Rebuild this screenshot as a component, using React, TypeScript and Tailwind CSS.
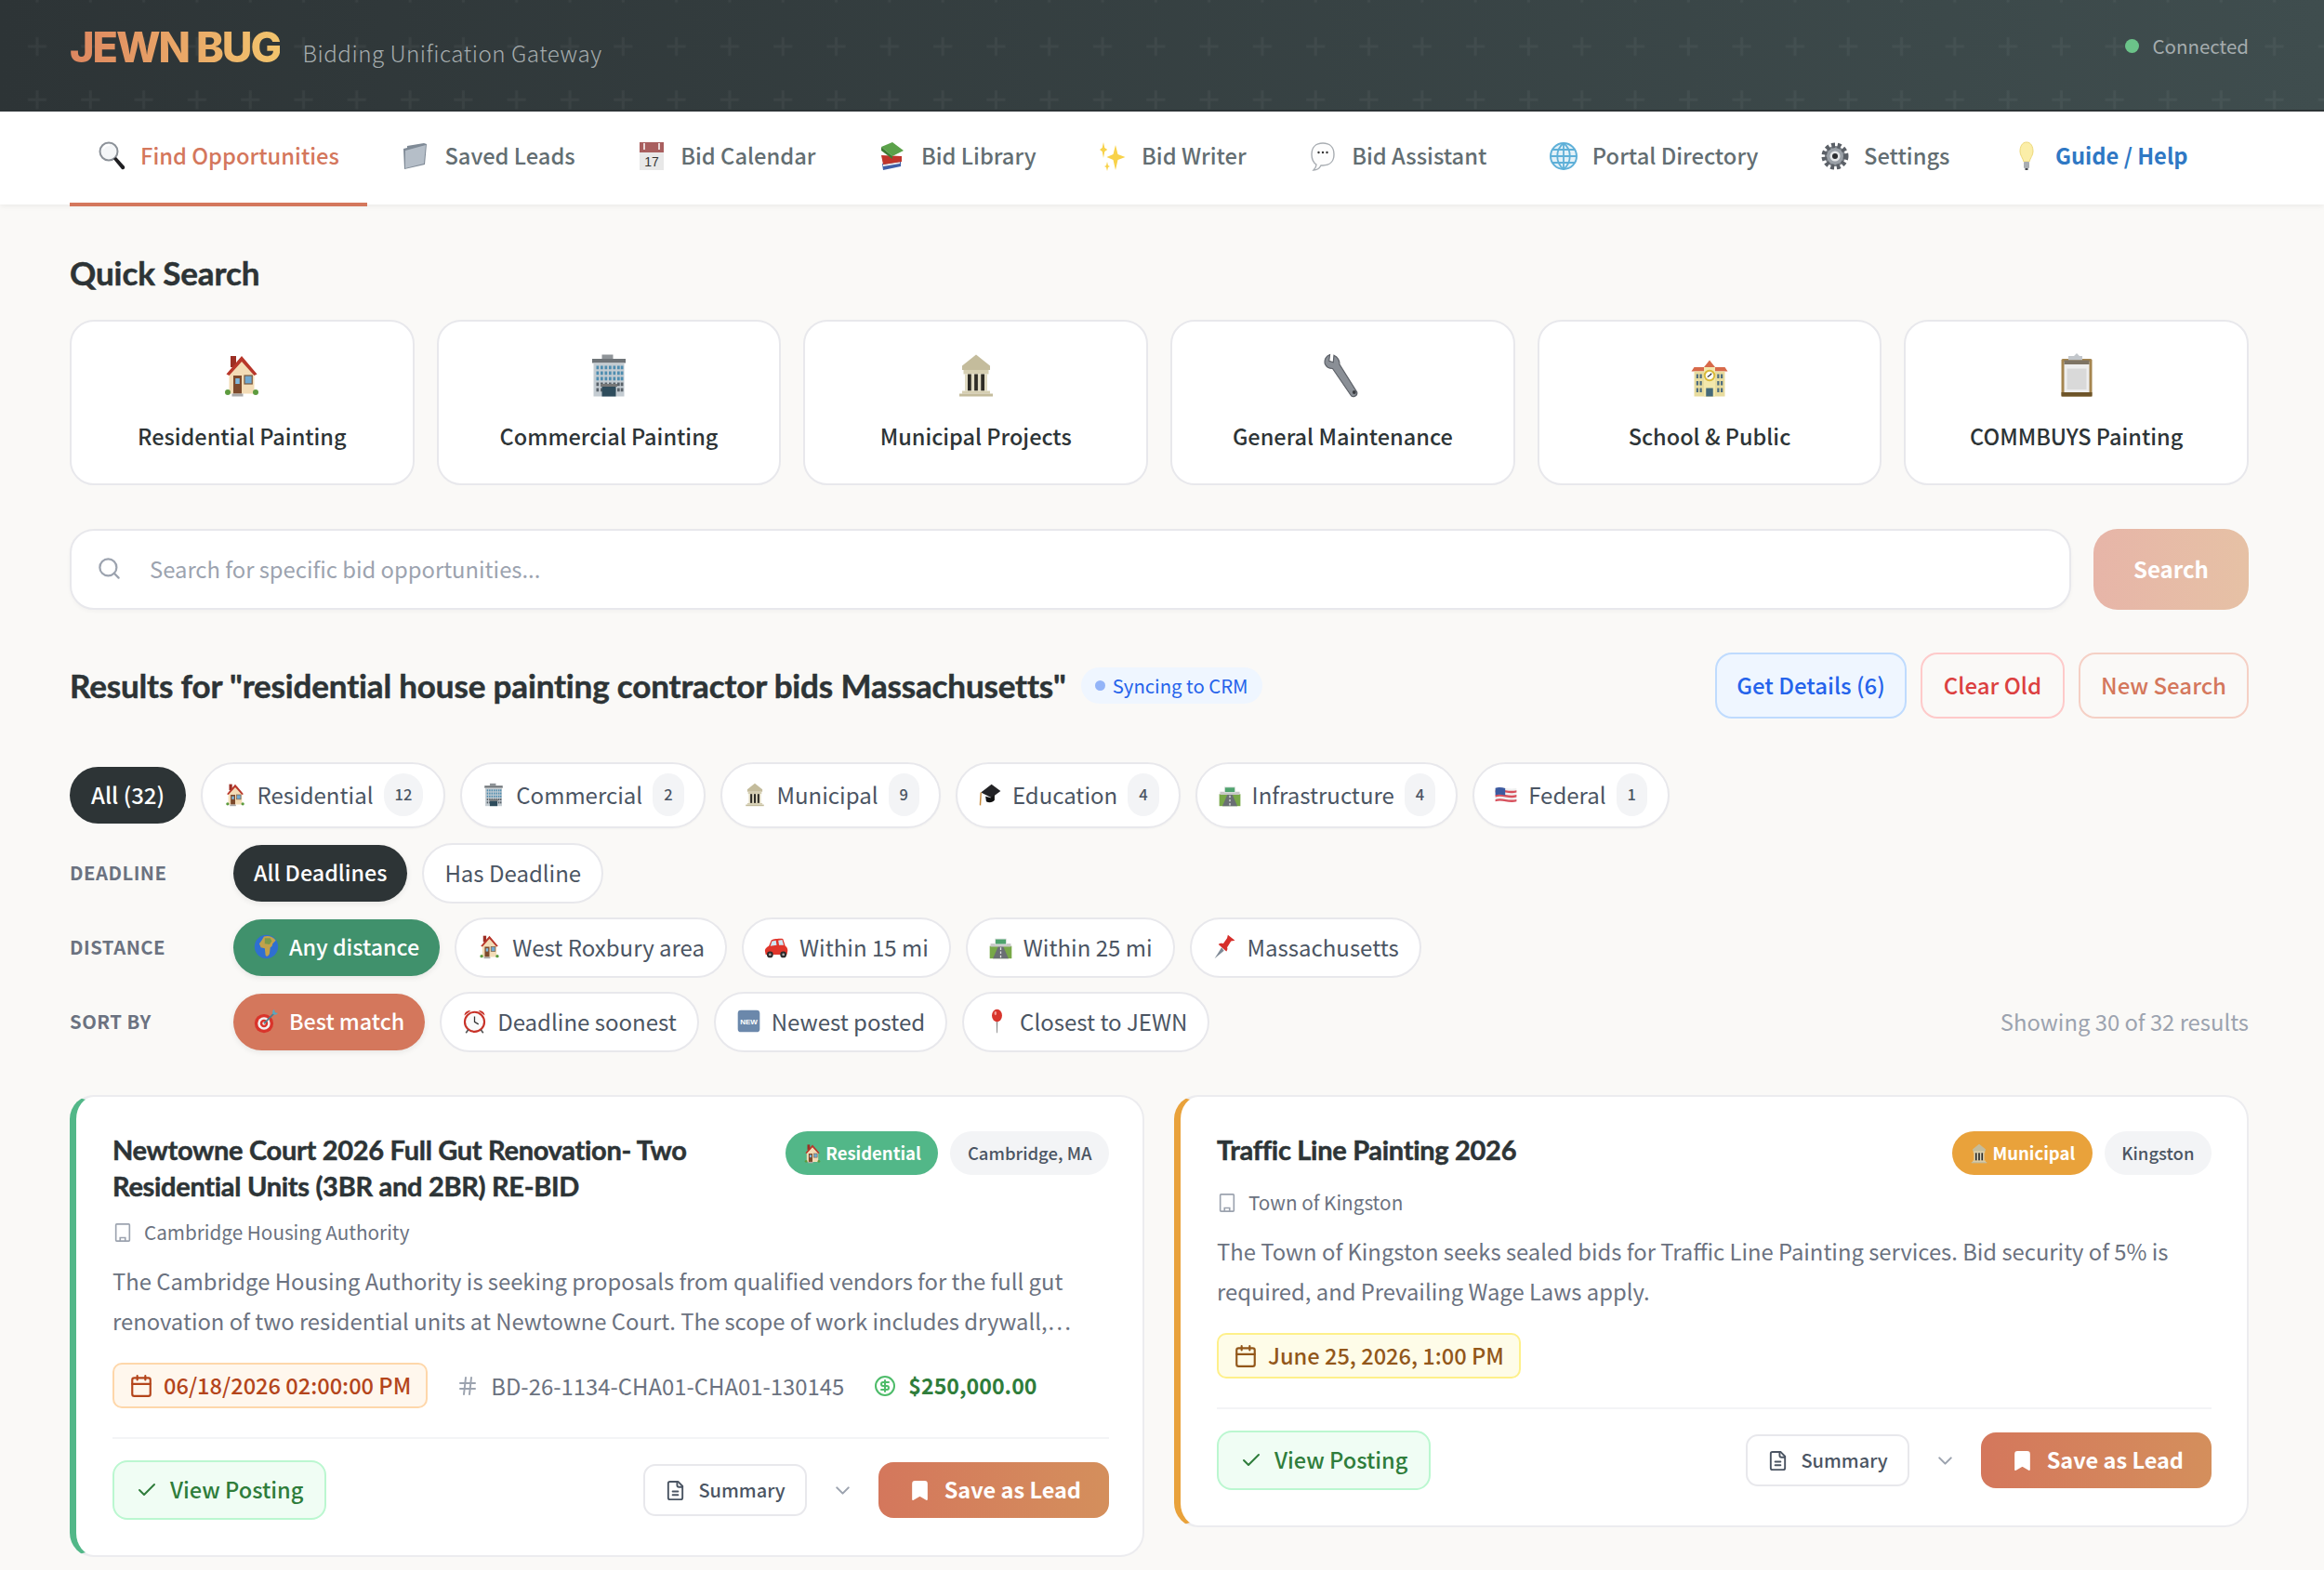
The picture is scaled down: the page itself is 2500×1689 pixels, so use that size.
import React from "react";

const body = "font-['Noto_Sans_CJK_SC','Noto_Sans',sans-serif]";
const head = "font-['Lato','Inter',sans-serif] [-webkit-text-stroke:0.5px_#2d3436]";

const S = ({ children, size = 32, className = "" }: { children: React.ReactNode; size?: number; className?: string }) => (
  <svg width={size} height={size} viewBox="0 0 32 32" className={`shrink-0 ${className}`}>{children}</svg>
);

const Magnifier = ({ size = 32 }: { size?: number }) => (
  <S size={size}>
    <circle cx="12" cy="11" r="9.5" fill="#f4f6f8" stroke="#8b9198" strokeWidth="2" />
    <path d="M6 8a7 7 0 0 1 7-4" stroke="#fff" strokeWidth="2" fill="none" />
    <path d="M17 19l3-2 9 10c1 2-1 4-3 3z" fill="#1f1f22" />
  </S>
);
const Folder = ({ size = 32 }: { size?: number }) => (
  <S size={size}>
    <path d="M3 8l4-1V5l18-3 3 1-2 22-22 5z" fill="#7f8a96" />
    <path d="M5 10l22-6-2 20-20 5z" fill="#b5bec8" />
  </S>
);
const Calendar = ({ size = 32 }: { size?: number }) => (
  <S size={size}>
    <rect x="3" y="1" width="26" height="30" fill="#e8e8e8" />
    <rect x="3" y="1" width="26" height="11" fill="#a95f5f" />
    <path d="M8 2v7M24 2v7" stroke="#fff" strokeWidth="1.5" />
    <text x="16" y="27" fontSize="14" textAnchor="middle" fill="#333" fontFamily="Liberation Sans">17</text>
  </S>
);
const Books = ({ size = 32 }: { size?: number }) => (
  <S size={size}>
    <path d="M5 24l20-3v6L6 31z" fill="#3f5fa8" />
    <path d="M6 25l18-3v2L6 27z" fill="#eee" />
    <path d="M4 15l22 1v6L6 25z" fill="#c0352b" />
    <path d="M4 6l12-5 12 9-12 6z" fill="#5ba24a" />
    <path d="M4 6l12 10v3L4 10z" fill="#3e7c33" />
  </S>
);
const Sparkles = ({ size = 32 }: { size?: number }) => (
  <S size={size}>
    <path d="M19 4l2.500 10 8 3-8 3L19 31l-2.500-11-7-3 7-3z" fill="#f8d24a" />
    <path d="M6 1l1.300 6 3 2-3 2L6 18l-1.300-7-2.700-2 2.700-2z" fill="#f8d24a" />
    <path d="M10 22l1 4 2 1-2 1-1 4-1-4-2-1 2-1z" fill="#f8d24a" />
  </S>
);
const Speech = ({ size = 32 }: { size?: number }) => (
  <S size={size}>
    <path d="M16 2C8 2 4 7 4 14c0 6 2 9 5 11 0 2-1 4-3 6 4 0 7-3 8-5h2c8 0 12-5 12-12S24 2 16 2z" fill="#fdfdfd" stroke="#a8adb2" strokeWidth="1.400" />
    <circle cx="11.500" cy="12" r="1.200" fill="#333" /><circle cx="16" cy="12" r="1.200" fill="#333" /><circle cx="20.500" cy="12" r="1.200" fill="#333" />
  </S>
);
const Globe = ({ size = 32 }: { size?: number }) => (
  <S size={size}>
    <circle cx="16" cy="16" r="14" fill="#e3f1f8" stroke="#5fb0d8" strokeWidth="2" />
    <path d="M2 16h28M4 9h24M4 23h24M16 2v28M16 2c-9 7-9 21 0 28M16 2c9 7 9 21 0 28" stroke="#5fb0d8" strokeWidth="1.800" fill="none" />
  </S>
);
const Gear = ({ size = 32 }: { size?: number }) => (
  <S size={size}>
    <circle cx="16" cy="16" r="11" fill="#7b8087" stroke="#5b6067" strokeWidth="7" strokeDasharray="3.500 2.500" />
    <circle cx="16" cy="16" r="9" fill="#9aa0a7" />
    <circle cx="16" cy="16" r="5.500" fill="#e4e6e8" />
    <circle cx="16" cy="16" r="3" fill="#2b2d30" />
  </S>
);
const Bulb = ({ size = 32 }: { size?: number }) => (
  <S size={size}>
    <path d="M16 1c-5 0-7 5-7 10 0 4 3 7 4 11h6c1-4 4-7 4-11 0-5-2-10-7-10z" fill="#fbeea8" stroke="#edd87a" strokeWidth="1" />
    <rect x="13" y="22" width="6" height="7" rx="1" fill="#a9adb2" />
    <rect x="14.500" y="29" width="3" height="2" fill="#45484c" />
  </S>
);
const House = ({ size = 32 }: { size?: number }) => (
  <S size={size}>
    <path d="M7 14L16 4l9 10v15H7z" fill="#f3dcb6" />
    <rect x="8" y="2" width="4" height="8" fill="#9c2f24" />
    <path d="M5 15L16 2l11 13-2 1L16 6 7 16z" fill="#b8362a" />
    <rect x="10" y="16" width="6" height="13" fill="#7d4a2c" />
    <rect x="11.500" y="18" width="3" height="4" fill="#7fb8dc" />
    <rect x="18" y="16" width="5.500" height="6" fill="#6fa8d0" stroke="#7d5a3c" strokeWidth="0.800" />
    <circle cx="6" cy="28" r="2" fill="#5d9b3f" /><circle cx="26" cy="28" r="2" fill="#5d9b3f" />
    <rect x="9" y="29" width="8" height="2" fill="#a9a9a9" />
  </S>
);
const Office = ({ size = 32 }: { size?: number }) => (
  <S size={size}>
    <rect x="11" y="1" width="8" height="3" fill="#8f9498" />
    <rect x="4" y="4" width="24" height="3" fill="#6f7478" />
    <rect x="5" y="7" width="22" height="24" fill="#c4ccd2" />
    {[9, 13, 17, 21, 25].map((y) => [7, 10, 13, 16, 19, 22, 24.5].map((x) => <rect key={`${x}-${y}`} x={x} y={y} width="1.800" height="2.500" fill={y > 20 ? "#59626a" : "#4e8db0"} />))}
    <rect x="11" y="24" width="10" height="7" fill="#2e4c5c" />
    <rect x="10" y="22" width="12" height="2" fill="#777" />
  </S>
);
const Classical = ({ size = 32 }: { size?: number }) => (
  <S size={size}>
    <path d="M16 1L6 9v3h20V9z" fill="#c4bc9c" />
    <rect x="7" y="12" width="18" height="3" fill="#d6cfb2" />
    <rect x="8" y="15" width="16" height="12" fill="#e0dac2" />
    <rect x="10" y="15" width="2.500" height="12" fill="#2e2c26" /><rect x="14.750" y="15" width="2.500" height="12" fill="#2e2c26" /><rect x="19.500" y="15" width="2.500" height="12" fill="#2e2c26" />
    <rect x="6" y="27" width="20" height="2" fill="#d6cfb2" /><rect x="4" y="29" width="24" height="2" fill="#c4bc9c" />
  </S>
);
const Wrench = ({ size = 32 }: { size?: number }) => (
  <S size={size}>
    <path d="M7 1C4 2 3 5 3.500 7.500 4.500 10 7 11 9 11l13 19c1 2 5 1 4.500-2L14 8c0-3-1-5-4-6.500l-.5 5-3-1z" fill="#8a8f96" stroke="#5d6168" strokeWidth="0.800" />
    <circle cx="24.500" cy="28" r="1.300" fill="#3a3c40" />
  </S>
);
const School = ({ size = 32 }: { size?: number }) => (
  <S size={size}>
    <path d="M16 5l-4 5H5l-2 3h26l-2-3h-7z" fill="#d86a4a" />
    <rect x="5" y="13" width="22" height="18" fill="#e8dc9e" />
    <rect x="12" y="10" width="8" height="21" fill="#f3e8ac" />
    <circle cx="16" cy="16" r="3.500" fill="#fff" stroke="#d9b93a" strokeWidth="1.300" />
    <path d="M16 16l1.500-1.500M16 16l-1.500 1" stroke="#333" strokeWidth="0.800" />
    <rect x="13.500" y="25" width="5" height="6" fill="#456a7a" />
    {[15, 20, 25].map((y) => [6.5, 9, 21.5, 24].map((x) => <rect key={`${x}-${y}`} x={x} y={y} width="1.500" height="3" fill="#4f6e80" />))}
  </S>
);
const Clipboard = ({ size = 32 }: { size?: number }) => (
  <S size={size}>
    <rect x="5" y="4" width="22" height="27" rx="1" fill="#a5854f" />
    <rect x="7" y="6" width="18" height="23" fill="#eeeeee" />
    <path d="M12 2h2l2-2 2 2h2v3H10V2z" fill="#c2c6cb" />
    <rect x="7" y="5" width="18" height="3" fill="#7e7464" />
    <rect x="9" y="11" width="14" height="15" fill="#d9d9d9" />
    <rect x="5" y="28" width="22" height="3" fill="#6d5429" />
  </S>
);
const GradCap = ({ size = 32 }: { size?: number }) => (
  <S size={size}>
    <path d="M18 2L4 13l14 7 12-9z" fill="#232326" />
    <path d="M10 18l1 7c4 2 9 1 11-2v-7l-5 4z" fill="#111" />
    <path d="M4 13l-1 17" stroke="#c68a3c" strokeWidth="1.800" />
  </S>
);
const Motorway = ({ size = 32 }: { size?: number }) => (
  <S size={size}>
    <rect x="2" y="15" width="28" height="16" fill="#78a848" />
    <path d="M13 15h6l7 16H6z" fill="#6a6f74" />
    <path d="M16 17v14" stroke="#e6e6e6" strokeWidth="1.500" strokeDasharray="3 2" />
    <rect x="3" y="12" width="26" height="4" fill="#c8c8c8" />
    <rect x="9" y="6" width="14" height="7" fill="#4fa36e" stroke="#e5e5e5" />
  </S>
);
const Flag = ({ size = 32 }: { size?: number }) => (
  <S size={size}>
    <path d="M2 7c9-3 18 3 28 0v18c-10 3-19-3-28 0z" fill="#f1f1f1" />
    <path d="M2 10c9-3 18 3 28 0v3c-10 3-19-3-28 0zM2 16c9-3 18 3 28 0v3c-10 3-19-3-28 0zM2 22c9-3 18 3 28 0v3c-10 3-19-3-28 0z" fill="#d8505c" />
    <path d="M2 7c5-1.500 9-.5 13 .5V17c-4-1-8-2-13-.5z" fill="#3c5aa0" />
  </S>
);
const Earth = ({ size = 32 }: { size?: number }) => (
  <S size={size}>
    <circle cx="16" cy="16" r="15" fill="#2f6fd0" />
    <path d="M13 3c5-2 12 0 15 5l-4 4c0 2-1 4-3 5l-1 8c-1 3-4 4-5 2l-1-9-5-1-2-5 3-4z" fill="#c2a24a" />
    <path d="M14 5l7 0 2 4-3 4-6-1z" fill="#7a9a4a" />
  </S>
);
const Car = ({ size = 32 }: { size?: number }) => (
  <S size={size}>
    <path d="M9 8c1-2 12-3 15-2l3 9c2 1 3 3 3 6l-1 5H2l-1-5c0-3 3-5 5-6z" fill="#e0352b" />
    <path d="M10 9l5-1 1 6-8 1zM18 8l5-1 2 7-6 0z" fill="#cfe6f2" />
    <circle cx="7.500" cy="26" r="4" fill="#2a2a2a" /><circle cx="24.500" cy="26" r="4" fill="#2a2a2a" />
    <circle cx="7.500" cy="26" r="1.600" fill="#aaa" /><circle cx="24.500" cy="26" r="1.600" fill="#aaa" />
  </S>
);
const PushPin = ({ size = 32 }: { size?: number }) => (
  <S size={size}>
    <path d="M20 1l9 7-5 1-5 8c1 2 0 4-1 5L8 13c1-1 4-2 6-1l5-7z" fill="#d62f2b" />
    <path d="M12 17l-9 14 12-10z" fill="#7f8a96" />
  </S>
);
const Target = ({ size = 32 }: { size?: number }) => (
  <S size={size}>
    <circle cx="13" cy="19" r="12" fill="#d9342b" />
    <circle cx="13" cy="19" r="8" fill="#f4f0f0" />
    <circle cx="13" cy="19" r="5" fill="#d9342b" />
    <circle cx="13" cy="19" r="2" fill="#f4f0f0" />
    <path d="M13 19L27 5" stroke="#4a7f8f" strokeWidth="2" />
    <path d="M24 3l2-2 1 4 4 1-3 2-4-1z" fill="#59a8c0" />
  </S>
);
const Alarm = ({ size = 32 }: { size?: number }) => (
  <S size={size}>
    <path d="M3 9c0-4 4-7 8-6zM29 9c0-4-4-7-8-6z" fill="#c83228" />
    <circle cx="16" cy="17" r="12.500" fill="#fafafa" stroke="#c83228" strokeWidth="2.500" />
    <path d="M16 10v7l5 3" stroke="#333" strokeWidth="1.500" fill="none" />
    <path d="M8 27l-3 4M24 27l3 4" stroke="#555" strokeWidth="2" />
  </S>
);
const NewBadge = ({ size = 32 }: { size?: number }) => (
  <S size={size}>
    <rect x="2" y="2" width="28" height="28" rx="4" fill="#6b88ab" />
    <text x="16" y="20" fontSize="9.500" fontWeight="700" textAnchor="middle" fill="#fff" fontFamily="Liberation Sans">NEW</text>
  </S>
);
const RoundPin = ({ size = 32 }: { size?: number }) => (
  <S size={size}>
    <path d="M15 14h2l-.5 17h-1z" fill="#8c8c8c" />
    <ellipse cx="16" cy="9" rx="6.500" ry="8" fill="#d8352c" />
    <ellipse cx="14" cy="6" rx="1.500" ry="2.500" fill="#f3a19a" />
  </S>
);

const Tile = ({ icon, label }: { icon: React.ReactNode; label: string }) => (
  <button className="flex h-[178px] flex-col items-center rounded-[26px] border-2 border-[#e8e8ec] bg-white pt-[34px]">
    {icon}
    <span className="mt-[23px] text-[23.500px] leading-[36px] font-medium text-[#2d3436]">{label}</span>
  </button>
);

const navItems: [React.ReactNode, string][] = [
  [<Folder />, "Saved Leads"],
  [<Calendar />, "Bid Calendar"],
  [<Books />, "Bid Library"],
  [<Sparkles />, "Bid Writer"],
  [<Speech />, "Bid Assistant"],
  [<Globe />, "Portal Directory"],
  [<Gear />, "Settings"],
];

const Chip = ({ icon, label, count }: { icon?: React.ReactNode; label: string; count?: string }) => (
  <span className="flex h-[71px] items-center gap-[11px] rounded-full border-2 border-[#e8e8ec] bg-white px-[21.500px] pb-[2px] text-[24px] whitespace-nowrap text-[#4b5563] shadow-[0_1px_2px_rgba(0,0,0,0.03)]">
    {icon}
    {label}
    <span className="flex h-[46px] min-w-[33px] items-center justify-center rounded-full bg-[#f3f4f6] px-[12px] text-[16.500px] font-medium text-[#4b5563]">{count}</span>
  </span>
);

const Pill = ({ icon, label, active }: { icon?: React.ReactNode; label: string; active?: string }) => (
  <span className={`flex items-center gap-[11px] rounded-full pb-[2px] whitespace-nowrap ${active ? `my-[2px] h-[61px] px-[22px] text-[23.300px] font-medium text-white shadow-[0_2px_6px_rgba(0,0,0,0.08)] ${active}` : "h-[65px] border-2 border-[#e8e8ec] bg-white px-[22px] text-[24px] text-[#4b5563]"}`}>
    {icon}
    {label}
  </span>
);

const FilterRow = ({ label, children, right }: { label: string; children: React.ReactNode; right?: React.ReactNode }) => (
  <div className="flex h-[65px] items-center">
    <span className="w-[176px] pb-[2px] text-[20.300px] font-semibold tracking-[0.5px] text-[#6b7280]">{label}</span>
    <div className="flex items-center gap-[16px]">{children}</div>
    {right}
  </div>
);

const OrgIcon = () => (
  <svg width="22" height="24" viewBox="0 0 24 24" fill="none" stroke="#9ca3af" strokeWidth="1.800">
    <rect x="4" y="2" width="16" height="20" rx="1" />
    <path d="M9 22v-4h6v4M8 6h.01M12 6h.01M16 6h.01M8 10h.01M12 10h.01M16 10h.01M8 14h.01M12 14h.01M16 14h.01" />
  </svg>
);
const CalIcon = ({ color }: { color: string }) => (
  <svg width="26" height="26" viewBox="0 0 24 24" fill="none" stroke={color} strokeWidth="2" strokeLinecap="round">
    <path d="M8 2v4M16 2v4" />
    <rect x="3" y="4" width="18" height="18" rx="2" />
    <path d="M3 10h18" />
  </svg>
);
const CheckIcon = () => (
  <svg width="24" height="24" viewBox="0 0 24 24" fill="none" stroke="#2f7d3b" strokeWidth="2" strokeLinecap="round" strokeLinejoin="round">
    <path d="M20 6L9 17l-5-5" />
  </svg>
);
const DocIcon = () => (
  <svg width="23" height="23" viewBox="0 0 24 24" fill="none" stroke="#4b5563" strokeWidth="2" strokeLinecap="round" strokeLinejoin="round">
    <path d="M15 2H6a2 2 0 0 0-2 2v16a2 2 0 0 0 2 2h12a2 2 0 0 0 2-2V7z" />
    <path d="M14 2v4a2 2 0 0 0 2 2h4M9 13h6M9 17h6" />
  </svg>
);
const Chevron = () => (
  <svg width="25" height="25" viewBox="0 0 24 24" fill="none" stroke="#9ca3af" strokeWidth="2" strokeLinecap="round" strokeLinejoin="round">
    <path d="M6 9l6 6 6-6" />
  </svg>
);
const Bookmark = () => (
  <svg width="25" height="25" viewBox="0 0 24 24" fill="#fff" stroke="#fff" strokeWidth="2" strokeLinecap="round" strokeLinejoin="round">
    <path d="M19 21l-7-4-7 4V5a2 2 0 0 1 2-2h10a2 2 0 0 1 2 2z" />
  </svg>
);

const Actions = () => (
  <div className="flex items-center pt-[23px]">
    <span className="flex h-[64px] items-center gap-[13px] rounded-[16px] border-2 border-[#bbf7d0] bg-[#f0fdf4] px-[23px] text-[23.600px] font-medium whitespace-nowrap text-[#2f7d3b]">
      <CheckIcon />
      View Posting
    </span>
    <span className="ml-auto flex h-[56px] items-center gap-[13px] rounded-[13px] border-2 border-[#e8e8ec] bg-white pr-[21px] pl-[21px] text-[20px] font-medium whitespace-nowrap text-[#4b5563]">
      <DocIcon />
      Summary
    </span>
    <span className="mx-[26px] flex"><Chevron /></span>
    <span className="flex h-[60px] items-center gap-[14px] rounded-[16px] bg-gradient-to-r from-[#d4775c] to-[#d48f5c] pr-[30px] pl-[32px] text-[23.500px] font-semibold whitespace-nowrap text-white">
      <Bookmark />
      Save as Lead
    </span>
  </div>
);

const Tag = ({ children, className = "" }: { children: React.ReactNode; className?: string }) => (
  <span className={`flex h-[47px] shrink-0 items-center rounded-full px-[18.500px] text-[18.500px] whitespace-nowrap ${className}`}>{children}</span>
);

const Card = ({
  accent,
  title,
  tag,
  loc,
  org,
  desc,
  meta,
  pr,
}: {
  accent: string;
  title: React.ReactNode;
  tag: React.ReactNode;
  loc: string;
  org: string;
  desc: React.ReactNode;
  meta: React.ReactNode;
  pr: string;
}) => (
  <div className={`flex flex-col rounded-[26px] border-2 border-l-[7px] border-[#ececef] bg-white pt-[37px] pb-[38px] pl-[39px] ${accent} ${pr}`}>
    <div className="flex items-start justify-between gap-[16px]">
      <h3 className={`${head} pb-[1px] text-[29px] leading-[39px] font-bold tracking-[-0.3px] text-[#2d3436]`}>{title}</h3>
      <div className="flex shrink-0 gap-[13px]">
        {tag}
        <Tag className="bg-[#f3f4f6] font-medium text-[#4b5563]">{loc}</Tag>
      </div>
    </div>
    <div className="mt-[15px] flex h-[30px] items-center gap-[12px] text-[20.700px] whitespace-nowrap text-[#6b7280]">
      <OrgIcon />
      {org}
    </div>
    <p className="mt-[15px] pb-[1px] text-[23.800px] leading-[43px] whitespace-nowrap text-[#6b7280]">{desc}</p>
    <div className="mt-[23px] flex items-center">{meta}</div>
    <div className="mt-[31px] border-t-2 border-[#f3f4f6]" />
    <Actions />
  </div>
);

export default function App() {
  return (
    <div className={`${body} min-h-[1689px] bg-[#faf9f7]`}>
      <header className="relative flex h-[120px] items-center justify-between overflow-hidden border-b-2 border-[#2d3436] bg-gradient-to-r from-[#2d3436] to-[#3f4d4e] pr-[81px] pb-[16px] pl-[75px]">
        <svg className="absolute inset-0 h-full w-full" aria-hidden="true">
          <defs>
            <pattern id="plus" width="57.300" height="57.300" x="11" y="22" patternUnits="userSpaceOnUse">
              <path d="M29 18v20M19 28h20" stroke="#ffffff" strokeOpacity="0.045" strokeWidth="3" />
            </pattern>
          </defs>
          <rect width="100%" height="100%" fill="url(#plus)" />
        </svg>
        <div className="relative flex items-baseline gap-[24px]">
          <span className="bg-gradient-to-r from-[#dd8660] to-[#f2c46d] bg-clip-text font-['Inter',sans-serif] text-[45px] leading-[60px] font-extrabold tracking-[-2px] text-transparent">JEWN BUG</span>
          <span className="text-[24.200px] font-light tracking-[0.5px] text-[#a5acae]">Bidding Unification Gateway</span>
        </div>
        <div className="relative -mt-[3px] flex items-center gap-[14px] text-[20.500px] text-[#a5acae]">
          <span className="h-[15px] w-[15px] rounded-full bg-[#6bc389]" />
          Connected
        </div>
      </header>

      <nav className="flex h-[100px] items-stretch gap-[6.500px] bg-white pr-[81px] pl-[75px] shadow-[0_2px_6px_rgba(0,0,0,0.06)]">
        <span className="-mb-[2px] flex items-center gap-[14px] border-b-4 border-[#d4775c] px-[30px] pb-[2px] text-[23.700px] font-medium whitespace-nowrap text-[#d4775c]">
          <Magnifier />
          Find Opportunities
        </span>
        {navItems.map(([icon, label]) => (
          <span key={label} className="-mb-[2px] flex items-center gap-[15px] border-b-4 border-transparent px-[30px] pb-[2px] text-[23.700px] font-medium whitespace-nowrap text-[#636e72]">
            {icon}
            {label}
          </span>
        ))}
        <span className="-mb-[2px] flex items-center gap-[15px] border-b-4 border-transparent px-[30px] pb-[2px] text-[23.700px] font-semibold whitespace-nowrap text-[#2f78c4]">
          <Bulb />
          Guide / Help
        </span>
      </nav>

      <main className="pt-[48px] pr-[81px] pl-[75px]">
        <h2 className={`${head} text-[35px] leading-[50px] font-bold tracking-[-0.1px] text-[#2d3436]`}>Quick Search</h2>
        <div className="mt-[26px] grid grid-cols-6 gap-[24px]">
          <Tile icon={<House size={48} />} label="Residential Painting" />
          <Tile icon={<Office size={48} />} label="Commercial Painting" />
          <Tile icon={<Classical size={48} />} label="Municipal Projects" />
          <Tile icon={<Wrench size={48} />} label="General Maintenance" />
          <Tile icon={<School size={48} />} label="School &amp; Public" />
          <Tile icon={<Clipboard size={48} />} label="COMMBUYS Painting" />
        </div>

        <div className="mt-[47px] flex items-stretch gap-[24px]">
          <div className="flex h-[87px] flex-1 items-center gap-[30px] rounded-[26px] border-2 border-[#e8e8ec] bg-white pb-[2px] pl-[27px] text-[23.800px] text-[#9ca3af] shadow-[0_2px_4px_rgba(0,0,0,0.03)]">
            <svg width="27" height="27" viewBox="0 0 24 24" fill="none" stroke="#9ca3af" strokeWidth="2" strokeLinecap="round">
              <circle cx="11" cy="11" r="8" />
              <path d="M21 21l-4.300-4.300" />
            </svg>
            Search for specific bid opportunities...
          </div>
          <button className="flex w-[167px] items-center justify-center rounded-[26px] bg-gradient-to-r from-[#e7b5a8] to-[#e6c1a5] pb-[2px] text-[24px] font-semibold text-white">Search</button>
        </div>

        <div className="mt-[46px] flex h-[71px] items-center">
          <h2 className={`${head} text-[35px] font-bold tracking-[-0.15px] whitespace-nowrap text-[#2d3436]`}>Results for "residential house painting contractor bids Massachusetts"</h2>
          <span className="ml-[16px] flex h-[39px] items-center gap-[8px] rounded-full bg-[#eff6ff] px-[15px] pb-[1px] text-[20.300px] whitespace-nowrap text-[#2563eb]">
            <span className="h-[11px] w-[11px] rounded-full bg-[#93b4f8]" />
            Syncing to CRM
          </span>
          <div className="ml-auto flex gap-[15px]">
            <button className="h-[71px] rounded-[18px] border-2 border-[#bfdbfe] bg-[#eff6ff] px-[21px] pb-[2px] text-[24px] font-medium whitespace-nowrap text-[#2563eb]">Get Details (6)</button>
            <button className="h-[71px] rounded-[18px] border-2 border-[#fecaca] px-[23px] pb-[2px] text-[24px] font-medium whitespace-nowrap text-[#dc4040]">Clear Old</button>
            <button className="h-[71px] rounded-[18px] border-2 border-[#f5d0c5] px-[22px] pb-[2px] text-[24px] font-medium whitespace-nowrap text-[#d4775c]">New Search</button>
          </div>
        </div>

        <div className="mt-[47px] flex items-center gap-[16px]">
          <span className="flex h-[61px] items-center rounded-full bg-[#2d3436] px-[23px] pb-[2px] text-[24px] font-medium whitespace-nowrap text-white">All (32)</span>
          <Chip icon={<House size={26} />} label="Residential" count="12" />
          <Chip icon={<Office size={26} />} label="Commercial" count="2" />
          <Chip icon={<Classical size={26} />} label="Municipal" count="9" />
          <Chip icon={<GradCap size={26} />} label="Education" count="4" />
          <Chip icon={<Motorway size={26} />} label="Infrastructure" count="4" />
          <Chip icon={<Flag size={26} />} label="Federal" count="1" />
        </div>

        <div className="mt-[16px] flex flex-col gap-[15px]">
          <FilterRow label="DEADLINE">
            <Pill label="All Deadlines" active="bg-[#2d3436]" />
            <Pill label="Has Deadline" />
          </FilterRow>
          <FilterRow label="DISTANCE">
            <Pill icon={<Earth size={27} />} label="Any distance" active="bg-[#40916c]" />
            <Pill icon={<House size={27} />} label="West Roxbury area" />
            <Pill icon={<Car size={27} />} label="Within 15 mi" />
            <Pill icon={<Motorway size={27} />} label="Within 25 mi" />
            <Pill icon={<PushPin size={27} />} label="Massachusetts" />
          </FilterRow>
          <FilterRow label="SORT BY" right={<span className="ml-auto pb-[2px] text-[23.800px] text-[#9ca3af]">Showing 30 of 32 results</span>}>
            <Pill icon={<Target size={27} />} label="Best match" active="bg-[#d4775c]" />
            <Pill icon={<Alarm size={27} />} label="Deadline soonest" />
            <Pill icon={<NewBadge size={27} />} label="Newest posted" />
            <Pill icon={<RoundPin size={27} />} label="Closest to JEWN" />
          </FilterRow>
        </div>

        <div className="mt-[46px] grid grid-cols-2 items-start gap-[32px]">
          <Card
            accent="border-l-[#52b788]"
            pr="pr-[36px]"
            title={<>Newtowne Court 2026 Full Gut Renovation- Two<br />Residential Units (3BR and 2BR) RE-BID</>}
            tag={<Tag className="gap-[3px] bg-[#52b788] font-semibold text-white"><House size={22} />Residential</Tag>}
            loc="Cambridge, MA"
            org="Cambridge Housing Authority"
            desc={<>The Cambridge Housing Authority is seeking proposals from qualified vendors for the full gut<br />renovation of two residential units at Newtowne Court. The scope of work includes drywall,…</>}
            meta={
              <>
                <span className="flex h-[49px] items-center gap-[11px] rounded-[10px] border-2 border-[#fed7aa] bg-[#fff7ed] px-[16px] text-[23.600px] font-medium whitespace-nowrap text-[#b4451b]">
                  <CalIcon color="#b4451b" />
                  06/18/2026 02:00:00 PM
                </span>
                <svg className="ml-[31px] shrink-0" width="24" height="24" viewBox="0 0 24 24" fill="none" stroke="#9ca3af" strokeWidth="2" strokeLinecap="round">
                  <path d="M4 9h16M4 15h16M10 3L8 21M16 3l-2 18" />
                </svg>
                <span className="ml-[13px] text-[23.900px] whitespace-nowrap text-[#6b7280]">BD-26-1134-CHA01-CHA01-130145</span>
                <svg className="ml-[32px] shrink-0" width="24" height="24" viewBox="0 0 24 24" fill="none" stroke="#4ebc6a" strokeWidth="2" strokeLinecap="round">
                  <circle cx="12" cy="12" r="10" />
                  <path d="M16 8h-6a2 2 0 1 0 0 4h4a2 2 0 1 1 0 4H8M12 18V6" />
                </svg>
                <span className="ml-[13px] text-[23.200px] font-semibold whitespace-nowrap text-[#2f7d3b]">$250,000.00</span>
              </>
            }
          />
          <Card
            accent="border-l-[#e9a23b]"
            pr="pr-[38px]"
            title="Traffic Line Painting 2026"
            tag={<Tag className="gap-[3px] bg-[#e9a23b] font-semibold text-white"><Classical size={22} />Municipal</Tag>}
            loc="Kingston"
            org="Town of Kingston"
            desc={<>The Town of Kingston seeks sealed bids for Traffic Line Painting services. Bid security of 5% is<br />required, and Prevailing Wage Laws apply.</>}
            meta={
              <span className="flex h-[49px] items-center gap-[11px] rounded-[10px] border-2 border-[#fef08a] bg-[#fefce8] px-[16px] text-[23.600px] font-medium whitespace-nowrap text-[#92571a]">
                <CalIcon color="#92571a" />
                June 25, 2026, 1:00 PM
              </span>
            }
          />
        </div>
      </main>
    </div>
  );
}
